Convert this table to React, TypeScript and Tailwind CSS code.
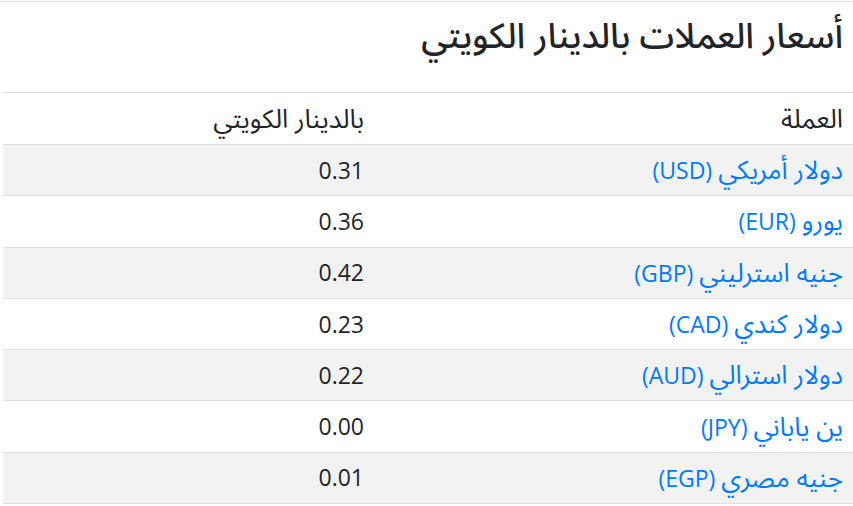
import React from "react";

const rows = [
  ["دولار أمريكي", "(USD)", "0.31"],
  ["يورو", "(EUR)", "0.36"],
  ["جنيه استرليني", "(GBP)", "0.42"],
  ["دولار كندي", "(CAD)", "0.23"],
  ["دولار استرالي", "(AUD)", "0.22"],
  ["ين ياباني", "(JPY)", "0.00"],
  ["جنيه مصري", "(EGP)", "0.01"],
];

export default function App() {
  return (
    <div
      dir="rtl"
      className="w-[853px] h-[506px] bg-white text-[#212529] overflow-hidden"
      style={{ fontFamily: '"Open Sans", "Noto Sans Arabic", "DejaVu Sans", sans-serif' }}
    >
      <div className="mt-px border-t border-[#dee2e6]">
        <h1 className="pr-[10px] pt-[10px] h-[90px] text-[35px] leading-[45px] font-medium">
          أسعار العملات بالدينار الكويتي
        </h1>
      </div>
      <table className="ml-[3px] w-[850px] border-collapse text-[23px] leading-[27px]">
        <thead>
          <tr className="border-t border-[#dee2e6]">
            <th className="w-[479px] h-[52px] px-[10px] py-0 text-right font-normal">
              <span className="text-[26px]">العملة</span>
            </th>
            <th className="h-[52px] pl-3 pr-[10px] py-0 text-right font-normal">
              <span className="text-[26px]">بالدينار الكويتي</span>
            </th>
          </tr>
        </thead>
        <tbody>
          {rows.map(([name, code, val], i) => (
            <tr
              key={code}
              className={`border-t border-[#dee2e6] ${i % 2 === 0 ? "bg-[#f2f2f2]" : "bg-white"}`}
            >
              <td className="h-[51.3px] px-[10px] py-0">
                <a className="text-[#007bff]" href="#">
                  <span className="text-[26px]">{name}</span> {code}
                </a>
              </td>
              <td className="h-[51.3px] pl-3 pr-[10px] py-0">{val}</td>
            </tr>
          ))}
          <tr className="border-t border-[#dee2e6]"><td colSpan={2}></td></tr>
        </tbody>
      </table>
    </div>
  );
}
